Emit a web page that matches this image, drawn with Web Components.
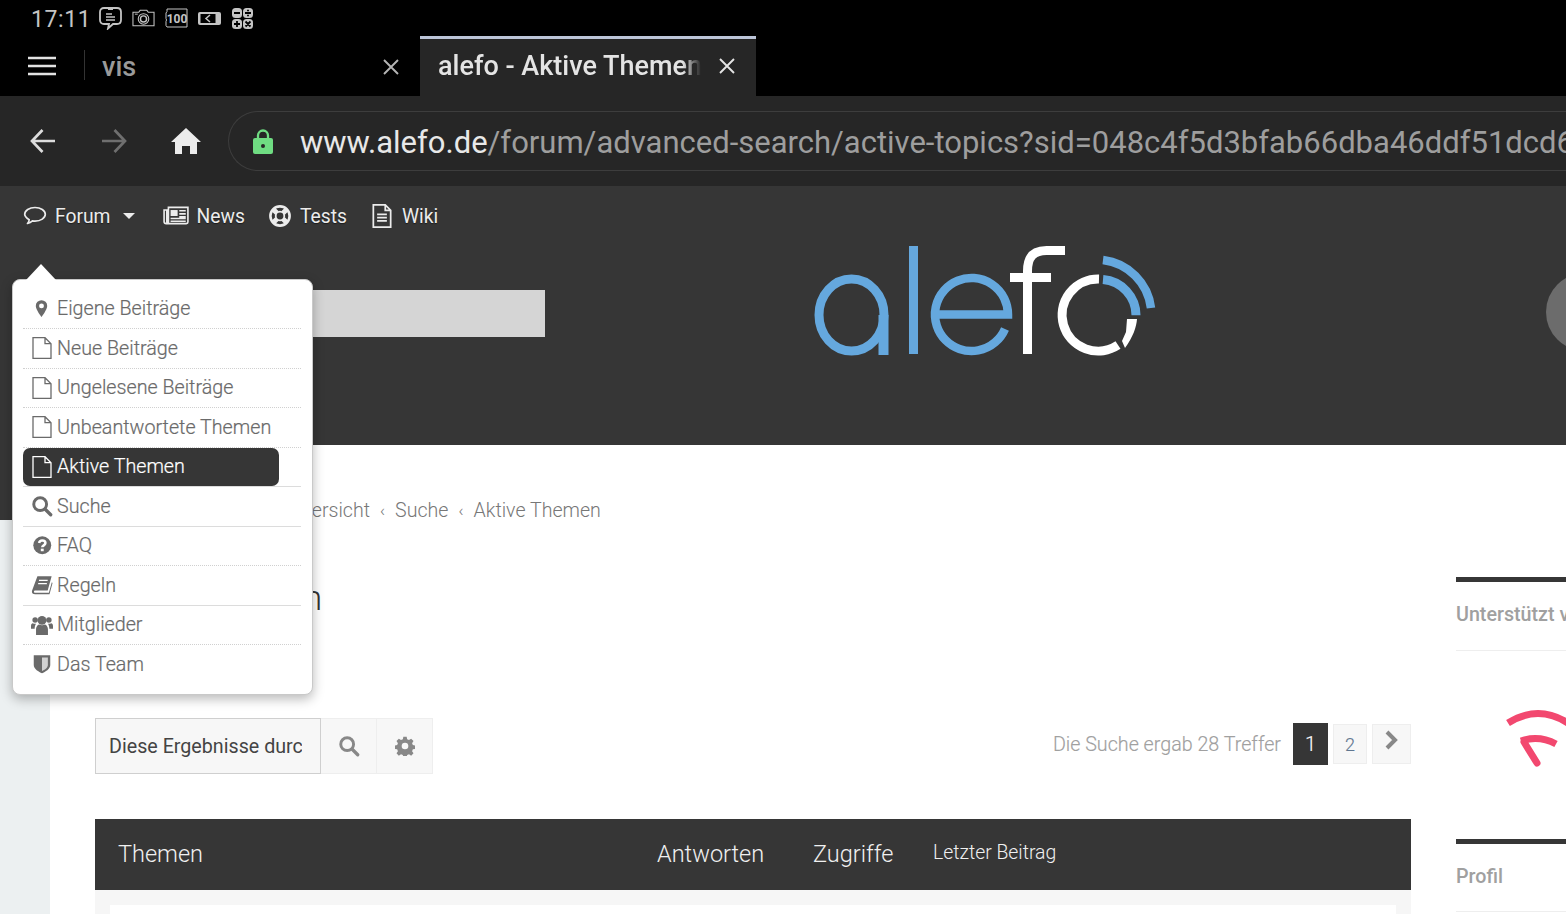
<!DOCTYPE html>
<html lang="de"><head><meta charset="utf-8"><title>alefo - Aktive Themen</title>
<style>
html,body{margin:0;padding:0;width:1566px;height:914px;overflow:hidden;background:#fff;font-family:Roboto,"Liberation Sans",sans-serif}
</style></head><body>
<app-shell></app-shell>
<script>
const P={
marker:'<path fill="currentColor" d="M12 1.500a7.200 7.200 0 0 0-7.200 7.200c0 4.600 7.200 14 7.200 14s7.200-9.400 7.200-14A7.200 7.200 0 0 0 12 1.500zm0 10.300a3.100 3.100 0 1 1 0-6.200 3.100 3.100 0 0 1 0 6.200z"/>',
file:'<path fill="none" stroke="currentColor" stroke-width="1.300" d="M3 1.700h12l6 6v14.600H3zM15 1.700v6h6"/>',
search:'<circle cx="10" cy="10" r="7" fill="none" stroke="currentColor" stroke-width="3.200"/><path stroke="currentColor" stroke-width="3.600" stroke-linecap="round" d="M15.500 15.500l6 6"/>',
faq:'<circle cx="12" cy="12" r="10.500" fill="currentColor"/><path fill="none" stroke="#fff" stroke-width="3" d="M8.300 9.300c.4-2 1.900-2.900 3.700-2.900 2.100 0 3.700 1.200 3.700 3 0 2.700-3.700 2.600-3.700 5"/><rect x="10.300" y="16" width="3.400" height="3" fill="#fff"/>',
book:'<path fill="currentColor" d="M7 2.500h15.500l-4.300 15.500H4.800c-1 0-1.600.6-1.600 1.300s.6 1.200 1.600 1.200h14.700l3.200-11.500.8.800-3.300 12.200H4.500C2 22 .8 20.700 1 18.700c.1-.6.300-1.100.5-1.600z"/><path stroke="#fff" stroke-width="1.300" d="M8.700 7h9.500M7.800 10.500h9.500"/>',
group:'<circle cx="12" cy="7" r="4.800" fill="currentColor"/><circle cx="4.500" cy="6.500" r="3" fill="currentColor"/><circle cx="19.500" cy="6.500" r="3" fill="currentColor"/><path fill="currentColor" d="M5.500 23v-6c0-3 2-5.500 3.500-5.500 1.500 1 4.500 1 6 0 1.500 0 3.500 2.500 3.500 5.500v6zM0 16v-3c0-2 1-3 2-3 1 .8 2.500.8 3.500.6-1 1.500-1.500 3-1.500 5.400zM24 16v-3c0-2-1-3-2-3-1 .8-2.500.8-3.500.6 1 1.500 1.500 3 1.500 5.400z"/>',
shield:'<path fill="currentColor" d="M3 2.500h18v10.500c0 4.500-5.500 7.500-9 9-3.500-1.500-9-4.500-9-9z"/><path fill="#d2d2d2" d="M12 5h6.400v8c0 3.200-3.800 5.400-6.400 6.600z"/>',
gear:'<path fill="currentColor" fill-rule="evenodd" d="M10 1.500h4l.6 3 2.200.9 2.600-1.700 2.800 2.800-1.700 2.600.9 2.200 3 .6v4l-3 .6-.9 2.200 1.700 2.600-2.800 2.800-2.600-1.700-2.200.9-.6 3h-4l-.6-3-2.200-.9-2.600 1.700-2.800-2.800 1.700-2.600-.9-2.200-3-.6v-4l3-.6.9-2.200-1.700-2.600 2.800-2.800 2.600 1.700 2.200-.9zM12 8.500a4 4 0 1 0 0 8 4 4 0 0 0 0-8z" transform="translate(0 -.5) scale(1)"/>',
comment:'<path fill="none" stroke="currentColor" stroke-width="1.700" stroke-linejoin="round" d="M12 3.500c5.700 0 10.300 3 10.300 6.800s-4.600 6.800-10.300 6.800c-.9 0-1.700-.1-2.500-.2-1.300 1.200-3 2.200-5 2.600 1-1.100 1.600-2.300 1.700-3.700C3.500 14.100 1.700 12.300 1.700 10.300c0-3.800 4.600-6.800 10.300-6.800z"/>',
news:'<path fill="none" stroke="currentColor" stroke-width="1.500" d="M1 6.500h2.500v11.200c0 1 1.500 1 1.500 0V4h18v13.500c0 1-.6 1.500-1.500 1.500H3c-1.200 0-2-.7-2-2z"/><rect x="7" y="6.500" width="6.500" height="5.500" fill="currentColor"/><path stroke="currentColor" stroke-width="1.500" d="M15 7.200h6M15 10h6M15 12.800h6M7 14.300h14M7 16.800h14"/>',
life:'<circle cx="12" cy="12" r="9.600" fill="none" stroke="currentColor" stroke-width="2.600"/><circle cx="12" cy="12" r="4.300" fill="none" stroke="currentColor" stroke-width="1.800"/><path stroke="currentColor" stroke-width="5" d="M5.400 5.400l3.500 3.500M18.600 5.400l-3.500 3.500M5.400 18.600l3.500-3.500M18.600 18.600l-3.500-3.500"/>',
doc:'<path fill="none" stroke="currentColor" stroke-width="1.600" d="M4 1.700h11l5 5v15.600H4zM15 1.700v5h5"/><path stroke="currentColor" stroke-width="1.500" d="M7.500 10.500h9M7.500 13.500h9M7.500 16.500h9"/>'
};
class UiIcon extends HTMLElement{
 connectedCallback(){
  const s=this.getAttribute('size')||20,n=this.getAttribute('name');
  this.attachShadow({mode:'open'}).innerHTML=`<style>:host{display:inline-flex;align-items:center;justify-content:center;flex:none}svg{display:block}</style><svg width="${s}" height="${s}" viewBox="0 0 24 24">${P[n]}</svg>`;
 }
}
customElements.define('ui-icon',UiIcon);

class StatusBar extends HTMLElement{
 connectedCallback(){
  this.attachShadow({mode:'open'}).innerHTML=`<style>
  :host{display:flex;align-items:center;height:36px;background:#000;color:#c4c4c4;padding-left:31px;gap:10px;font-size:23px;letter-spacing:.6px}
  span{width:58px;padding-top:2px}svg{display:block;flex:none}
  </style><span>17:11</span>
  <svg width="23" height="24" viewBox="0 0 23 24"><path fill="none" stroke="#c4c4c4" stroke-width="1.800" d="M5 2h13c2.500 0 4 1.500 4 4v8c0 2.500-1.500 4-4 4h-4l-5 4.500 1-4.500H5c-2.500 0-4-1.500-4-4V6c0-2.500 1.500-4 4-4z"/><path stroke="#c4c4c4" stroke-width="1.500" d="M9 3.200h5M7 8h6M7 11h9M7 14h9"/></svg>
  <svg width="23" height="18" viewBox="0 0 24 18"><path fill="none" stroke="#c4c4c4" stroke-width="1.100" d="M1 3h6l1.500-2h7L17 3h6v14H1z"/><circle cx="12" cy="10" r="5.500" fill="none" stroke="#c4c4c4" stroke-width="1.100"/><circle cx="12" cy="10" r="3.200" fill="none" stroke="#c4c4c4" stroke-width="1.500"/><path stroke="#c4c4c4" d="M3 5h3"/></svg>
  <svg width="23" height="20" viewBox="0 0 23 20"><path fill="none" stroke="#c4c4c4" d="M2 1h20v18H2l-1-1.500v-4l.5-1.500-.5-1.500V5l1-1.500z"/><text x="12" y="14.500" text-anchor="middle" font-family="Roboto" font-weight="700" font-size="12" letter-spacing="0" fill="#c4c4c4">100</text></svg>
  <svg width="23" height="15" viewBox="0 0 23 15"><path fill="#c4c4c4" d="M2 1h19a2 2 0 0 1 2 2v9a2 2 0 0 1-2 2H2a2 2 0 0 1-2-2V3a2 2 0 0 1 2-2z"/><rect x="2.500" y="3" width="15" height="9" fill="#000"/><path fill="none" stroke="#c4c4c4" stroke-width="1.500" d="M12 4L8 7.500l4 3.500"/></svg>
  <svg width="23" height="23" viewBox="0 0 23 23"><g fill="#c4c4c4"><rect x="1" y="1" width="10" height="10" rx="3.500"/><rect x="12" y="1" width="10" height="10" rx="3.500"/><rect x="1" y="12" width="10" height="10" rx="3.500"/><rect x="12" y="12" width="10" height="10" rx="3.500"/></g><path stroke="#000" stroke-width="1.800" d="M3 6h6M14 6h6M17 2.800v1.500M17 7.700v1.500M6 14v6M3 17h6M14.500 14.500l5 5M19.500 14.500l-5 5"/></svg>`;
 }
}
customElements.define('status-bar',StatusBar);

class TabBar extends HTMLElement{
 connectedCallback(){
  this.attachShadow({mode:'open'}).innerHTML=`<style>
  :host{display:flex;height:60px;background:#000;color:#9a9a9a}
  .menu{width:84px;display:flex;align-items:center;justify-content:center;flex:none}
  .sep{width:1px;height:30px;background:#333;align-self:center;margin-top:-2px}
  .tab{display:flex;align-items:center;box-sizing:border-box;flex:none}
  .t1{width:335px;padding-left:17px;justify-content:space-between;padding-right:20px;font-size:27px;font-weight:500}
  .t2{width:336px;background:#262626;border-top:3px solid #bcc5d8;color:#e4e4e4;padding-left:18px;font-size:27px;font-weight:500;padding-bottom:3px}
  .t2 span{display:block;width:263px;overflow:hidden;white-space:nowrap;-webkit-mask-image:linear-gradient(90deg,#000 93%,transparent 100%);mask-image:linear-gradient(90deg,#000 93%,transparent 100%)}
  .t2 svg{margin-left:17px}.t1 span,.t1 svg{position:relative;top:1px}
  </style>
  <div class="menu"><svg width="28" height="20" viewBox="0 0 28 20"><path stroke="#e2e2e2" stroke-width="2.600" d="M0 2h28M0 10h28M0 18h28"/></svg></div><div class="sep"></div>
  <div class="tab t1"><span>vis</span><svg width="18" height="18" viewBox="0 0 18 18"><path stroke="#b5b5b5" stroke-width="1.900" d="M2 2l14 14M16 2L2 16"/></svg></div>
  <div class="tab t2"><span>alefo - Aktive Themen</span><svg width="18" height="18" viewBox="0 0 18 18"><path stroke="#e4e4e4" stroke-width="1.900" d="M2 2l14 14M16 2L2 16"/></svg></div>`;
 }
}
customElements.define('tab-bar',TabBar);

class UrlBar extends HTMLElement{
 connectedCallback(){
  this.attachShadow({mode:'open'}).innerHTML=`<style>
  :host{display:flex;align-items:center;height:90px;background:#262626;overflow:hidden;padding-left:30px;box-sizing:border-box}
  svg{display:block;flex:none}
  .pill{flex:none;width:1500px;height:60px;margin-left:27px;box-sizing:border-box;border:1px solid #3d3d3d;border-right:0;border-radius:30px 0 0 30px;display:flex;align-items:center;padding-left:24px;font-size:31px;color:#9e9e9e;white-space:nowrap;overflow:hidden}
  b{font-weight:400;color:#e8e8e8}.pill span{margin-left:27px;padding-top:2px}
  </style>
  <svg width="25" height="26" viewBox="0 0 25 26"><path fill="none" stroke="#dcdcdc" stroke-width="2.700" d="M12.500 2L2 13l10.500 11M2 13h23"/></svg>
  <svg width="25" height="26" viewBox="0 0 25 26" style="margin-left:47px"><path fill="none" stroke="#6f6f6f" stroke-width="2.700" d="M12.500 2L23 13 12.500 24M23 13H0"/></svg>
  <svg width="30" height="26" viewBox="0 0 30 26" style="margin-left:44px"><path fill="#ececec" d="M15 0L0 14h4v12h7v-8h8v8h7V14h4z"/></svg>
  <div class="pill"><svg width="20" height="25" viewBox="0 0 20 25"><path fill="none" stroke="#6fdc82" stroke-width="2.300" d="M5 11V6.500a5 5 0 0 1 10 0V11"/><rect y="9" width="20" height="16" rx="2" fill="#6fdc82"/><circle cx="10" cy="17" r="2" fill="#262626"/></svg><span><b>www.alefo.de</b>/forum/advanced-search/active-topics?sid=048c4f5d3bfab66dba46ddf51dcd6a2e</span></div>`;
 }
}
customElements.define('url-bar',UrlBar);

class NavLink extends HTMLElement{
 connectedCallback(){
  this.attachShadow({mode:'open'}).innerHTML=`<style>:host{display:inline-flex;align-items:center;gap:8px;color:#ececec;font-size:19.300px;white-space:nowrap;text-shadow:0 1px 1px rgba(0,0,0,.5)}</style><slot></slot>`;
 }
}
customElements.define('nav-link',NavLink);

class AlefoLogo extends HTMLElement{
 connectedCallback(){
  this.attachShadow({mode:'open'}).innerHTML=`<style>:host{display:block;flex:none}svg{display:block}</style>
  <svg width="345" height="112" viewBox="812 245 345 112" role="img" aria-label="alefo">
  <g fill="none" stroke="#65a8de">
   <ellipse cx="851.500" cy="315" rx="32.500" ry="36" stroke-width="9"/><path stroke-width="10" d="M883.500 315v40"/>
   <path stroke-width="9" d="M913.500 246v108"/>
   <path stroke-width="8.500" d="M1005 329a36.500 36.500 0 1 1 3-14.500H933"/>
   <path stroke-width="9" d="M1103 279.600a36 36 0 0 1 33 35.700"/>
   <path stroke-width="8.500" d="M1103 260a55 55 0 0 1 48 48"/>
  </g>
  <g fill="none" stroke="#fff">
   <path stroke-width="9" d="M1027.500 354V271c0-14 6-20.500 19-20.500h18.500M1010 277.500h41"/>
   <path stroke-width="9" d="M1099 279.100a36 36 0 1 0 19 66"/>
  </g>
  <path fill="#fff" d="M1127 319h10c-.5 8-4 18-12 29l-3-7 4-9z"/>
  </svg>`;
 }
}
customElements.define('alefo-logo',AlefoLogo);

class SiteHeader extends HTMLElement{
 connectedCallback(){
  this.attachShadow({mode:'open'}).innerHTML=`<style>
  :host{display:block;height:259px;background:#363636;overflow:hidden}
  nav{display:flex;align-items:center;height:60px;padding-left:23px}
  .caret{width:0;height:0;border:6px solid transparent;border-top:6px solid #ececec;border-bottom:0;margin-left:4px}
  .row{display:flex;align-items:flex-start;height:199px}
  .search{width:232px;height:47px;background:#d5d5d5;margin:44px 0 0 313px;flex:none}
  alefo-logo{margin-left:267px;margin-top:-1px}
  .circle{width:78px;height:78px;border-radius:50%;background:#6c6c6c;margin:27px -78px 0 389px;flex:none}
  </style>
  <nav><nav-link style="margin-right:28px"><ui-icon name="comment" size="24"></ui-icon>Forum<span class="caret"></span></nav-link>
  <nav-link style="margin-right:23px"><ui-icon name="news" size="26"></ui-icon>News</nav-link>
  <nav-link style="margin-right:22px"><ui-icon name="life" size="24"></ui-icon>Tests</nav-link>
  <nav-link style="gap:7px"><ui-icon name="doc" size="26"></ui-icon>Wiki</nav-link></nav>
  <div class="row"><div class="search"></div><alefo-logo></alefo-logo><div class="circle"></div></div>`;
 }
}
customElements.define('site-header',SiteHeader);

class MenuItem extends HTMLElement{
 connectedCallback(){
  const i=this.getAttribute('icon'),s=this.getAttribute('size')||20,a=this.hasAttribute('active'),sep=this.getAttribute('sep')||'dotted',il=this.getAttribute('il')||0;
  this.attachShadow({mode:'open'}).innerHTML=`<style>
  :host{display:block;height:39.500px;box-sizing:border-box;border-bottom:1px ${sep} ${sep==='solid'?'#dcdcdc':'#d0d0d0'};font-size:19.700px;color:${a?'#fff':'#6a6a6a'};font-weight:300;-webkit-text-stroke:.2px currentColor}
  .in{display:flex;align-items:center;height:38px;width:${a?'256px':'auto'};box-sizing:border-box;${a?'background:#363636;border-radius:7px;':''}}
  .ic{width:34px;height:24px;flex:none;display:flex;align-items:center;color:${a?'#fff':'#6a6a6a'}}
  ui-icon{margin-left:${il}px}
  </style><div class="in"><div class="ic"><ui-icon name="${i}" size="${s}"></ui-icon></div><slot></slot></div>`;
 }
}
customElements.define('menu-item',MenuItem);

class QuickMenu extends HTMLElement{
 connectedCallback(){
  this.attachShadow({mode:'open'}).innerHTML=`<style>
  :host{position:absolute;left:12px;top:279px;width:301px;height:416px;box-sizing:border-box;background:#fff;border:1px solid #c9c9c9;border-radius:8px;box-shadow:0 4px 12px rgba(0,0,0,.28);padding:9.500px 11px 0 10px;z-index:5}
  .arrow{position:absolute;left:13px;top:-16px;width:0;height:0;border:15px solid transparent;border-bottom:16px solid #fff;border-top:0}
  </style><div class="arrow"></div><slot></slot>`;
 }
}
customElements.define('quick-menu',QuickMenu);

class SideBlock extends HTMLElement{
 connectedCallback(){
  this.attachShadow({mode:'open'}).innerHTML=`<style>
  :host{display:block;border-top:5px solid #363636}
  h3{margin:0;height:var(--h,69px);box-sizing:border-box;line-height:66px;font-size:19.700px;font-weight:500;color:#a0a0a0;border-bottom:1px solid #eee;white-space:nowrap}
  </style><h3><slot name="title"></slot></h3><slot></slot>`;
 }
}
customElements.define('side-block',SideBlock);

class PageBody extends HTMLElement{
 connectedCallback(){
  this.attachShadow({mode:'open'}).innerHTML=`<style>
  :host{display:grid;grid-template-columns:50px 1316px 110px;column-gap:45px;height:469px;overflow:hidden;background:#fff}
  .strip{width:50px;background:linear-gradient(90deg,#363636 12px,transparent 12px) 0 0/100% 75px no-repeat,#ecf0f1}
  .crumb{display:flex;align-items:center;height:30px;margin-top:50px;font-size:19.600px;font-weight:300;color:#777;white-space:nowrap;padding-left:193px}
  .crumb i{font-style:normal;margin:0 10px;font-size:17px}
  h1{margin:51px 0 0;font-size:35px;font-weight:300;color:#333;line-height:46px}
  .tools{display:flex;justify-content:space-between;align-items:flex-start;margin-top:96px;height:56px}
  .box{display:flex;height:56px}
  .inp{width:226px;box-sizing:border-box;border:1px solid #cfcfcf;background:#f7f7f7;font-size:19.700px;color:#444;display:flex;align-items:center;padding-left:13px;overflow:hidden;white-space:nowrap}
  .inp span{display:block;width:193px;overflow:hidden}
  .btn{width:56px;box-sizing:border-box;background:#f7f7f7;border:1px solid #eee;border-left:0;color:#888;display:flex;align-items:center;justify-content:center}
  .pager{display:flex;align-items:center;margin-top:5px;height:42px;color:#a0a0a0;font-size:19.700px;font-weight:300;-webkit-text-stroke:.15px currentColor}
  .pg{box-sizing:border-box;height:40px;background:#f7f7f7;border:1px solid #eee;display:flex;align-items:center;justify-content:center;color:#5f7690;margin-left:5px;font-size:18px}
  .cur{height:42px;width:35px;background:#363636;color:#fff;border:0;margin-left:12px;font-size:20px}
  .thead{display:grid;grid-template-columns:539px 156px 120px 1fr;align-items:center;height:71px;box-sizing:border-box;padding:0 0 2px 23px;background:#363636;color:#f0f0f0;margin-top:45px;font-size:23.500px;font-weight:300}
  .thead small{font-size:19.400px;margin-top:-3px}
  .tbody{background:#f6f6f6;padding:15px 15px 0;height:60px;box-sizing:border-box}
  .tbody div{background:#fff;height:100%}
  aside{margin-top:132px;width:110px}
  .wifi{height:188px;box-sizing:border-box;padding-left:50px;padding-top:57px}
  .wifi svg{display:block}
  </style>
  <div class="strip"></div>
  <main>
   <div class="crumb"><span>Übersicht</span><i>‹</i><span>Suche</span><i>‹</i><span>Aktive Themen</span></div>
   <h1>Aktive Themen</h1>
   <div class="tools">
    <div class="box"><div class="inp"><span>Diese Ergebnisse durchsuchen</span></div>
     <div class="btn"><ui-icon name="search" size="22"></ui-icon></div><div class="btn"><ui-icon name="gear" size="20"></ui-icon></div></div>
    <div class="pager"><span>Die Suche ergab 28 Treffer</span><div class="pg cur">1</div><div class="pg" style="width:34px">2</div>
     <div class="pg" style="width:39px"><svg width="16" height="20" viewBox="0 0 16 20" style="margin-top:-8px"><path fill="none" stroke="#888" stroke-width="4" d="M3 2l8 8-8 8"/></svg></div></div>
   </div>
   <div class="thead"><span>Themen</span><span>Antworten</span><span>Zugriffe</span><small>Letzter Beitrag</small></div>
   <div class="tbody"><div></div></div>
  </main>
  <aside>
   <side-block><span slot="title">Unterstützt von</span>
    <div class="wifi"><svg width="60" height="60" viewBox="0 0 60 60"><g fill="none" stroke="#f2486f" stroke-width="7"><path d="M2 15Q32 -4 62 15"/><path d="M15 33Q33 27 50 36"/><path stroke-linecap="round" d="M18 34L31 55"/></g></svg></div>
   </side-block>
   <side-block style="--h:68px"><span slot="title">Profil</span></side-block>
  </aside>`;
 }
}
customElements.define('page-body',PageBody);

class AppShell extends HTMLElement{
 connectedCallback(){
  this.attachShadow({mode:'open'}).innerHTML=`<style>:host{display:block;position:relative;width:1566px;height:914px;overflow:hidden;font-family:Roboto,"Liberation Sans",sans-serif}</style>
  <status-bar></status-bar><tab-bar></tab-bar><url-bar></url-bar><site-header></site-header><page-body></page-body>
  <quick-menu>
   <menu-item icon="marker" size="19" il="9">Eigene Beiträge</menu-item>
   <menu-item icon="file" size="24" il="7">Neue Beiträge</menu-item>
   <menu-item icon="file" size="24" il="7">Ungelesene Beiträge</menu-item>
   <menu-item icon="file" size="24" il="7">Unbeantwortete Themen</menu-item>
   <menu-item icon="file" size="24" il="7" active sep="solid">Aktive Themen</menu-item>
   <menu-item icon="search" size="22" il="8" sep="solid">Suche</menu-item>
   <menu-item icon="faq" size="20.500" il="9">FAQ</menu-item>
   <menu-item icon="book" size="22" il="8" sep="solid">Regeln</menu-item>
   <menu-item icon="group" size="22" il="8">Mitglieder</menu-item>
   <menu-item icon="shield" size="22" il="8" sep="none">Das Team</menu-item>
  </quick-menu>`;
 }
}
customElements.define('app-shell',AppShell);
</script>
</body></html>
